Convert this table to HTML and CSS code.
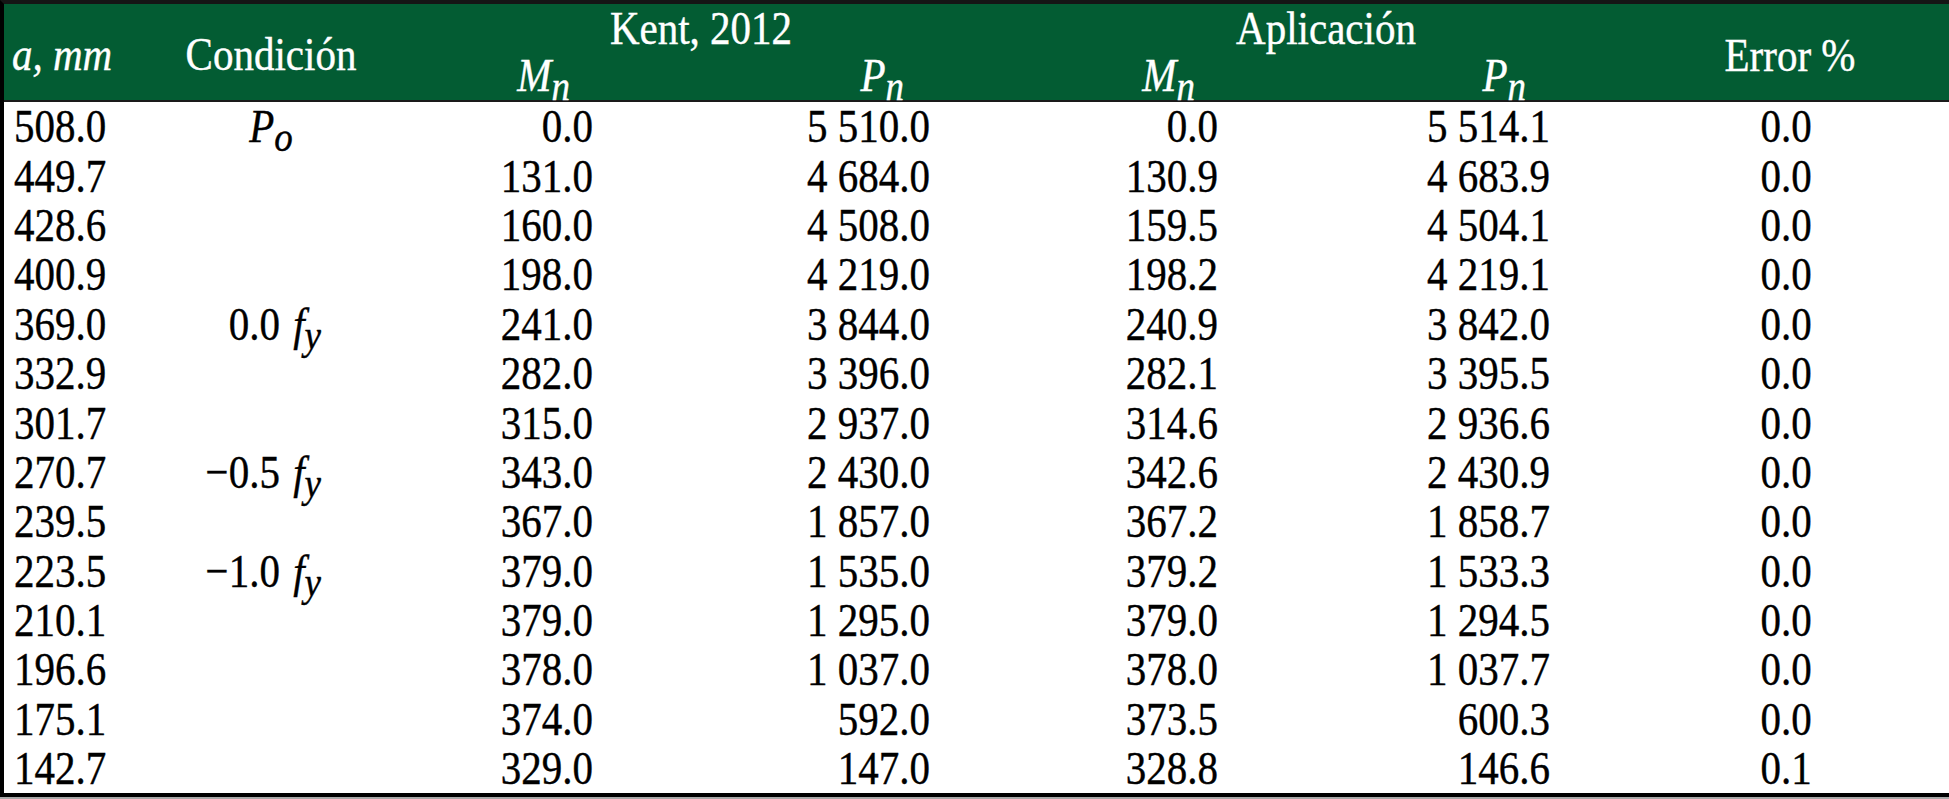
FILE: index.html
```html
<!DOCTYPE html>
<html lang="es">
<head>
<meta charset="utf-8">
<title>Tabla</title>
<link rel="stylesheet" href="styles.css">
</head>
<body>
<div class="sheet">
  <div class="head">
    <div class="h-a"><i>a, mm</i></div>
    <div class="h-cond">Condición</div>
    <div class="h-kent">Kent, 2012</div>
    <div class="h-apl">Aplicación</div>
    <div class="h-err">Error %</div>
    <div class="h-sub m"><i>M</i><sub>n</sub></div>
    <div class="h-sub p"><i>P</i><sub>n</sub></div>
    <div class="h-sub m"><i>M</i><sub>n</sub></div>
    <div class="h-sub p"><i>P</i><sub>n</sub></div>
  </div>
  <div class="body">
    <div class="c1">508.0</div><div class="c2"><i>P</i><sub>o</sub></div><div class="c3">0.0</div><div class="c4">5 510.0</div><div class="c5">0.0</div><div class="c6">5 514.1</div><div class="c7">0.0</div>
    <div class="c1">449.7</div><div class="c2"></div><div class="c3">131.0</div><div class="c4">4 684.0</div><div class="c5">130.9</div><div class="c6">4 683.9</div><div class="c7">0.0</div>
    <div class="c1">428.6</div><div class="c2"></div><div class="c3">160.0</div><div class="c4">4 508.0</div><div class="c5">159.5</div><div class="c6">4 504.1</div><div class="c7">0.0</div>
    <div class="c1">400.9</div><div class="c2"></div><div class="c3">198.0</div><div class="c4">4 219.0</div><div class="c5">198.2</div><div class="c6">4 219.1</div><div class="c7">0.0</div>
    <div class="c1">369.0</div><div class="c2 fy">0.0 <i>f</i><sub>y</sub></div><div class="c3">241.0</div><div class="c4">3 844.0</div><div class="c5">240.9</div><div class="c6">3 842.0</div><div class="c7">0.0</div>
    <div class="c1">332.9</div><div class="c2"></div><div class="c3">282.0</div><div class="c4">3 396.0</div><div class="c5">282.1</div><div class="c6">3 395.5</div><div class="c7">0.0</div>
    <div class="c1">301.7</div><div class="c2"></div><div class="c3">315.0</div><div class="c4">2 937.0</div><div class="c5">314.6</div><div class="c6">2 936.6</div><div class="c7">0.0</div>
    <div class="c1">270.7</div><div class="c2 fy">−0.5 <i>f</i><sub>y</sub></div><div class="c3">343.0</div><div class="c4">2 430.0</div><div class="c5">342.6</div><div class="c6">2 430.9</div><div class="c7">0.0</div>
    <div class="c1">239.5</div><div class="c2"></div><div class="c3">367.0</div><div class="c4">1 857.0</div><div class="c5">367.2</div><div class="c6">1 858.7</div><div class="c7">0.0</div>
    <div class="c1">223.5</div><div class="c2 fy">−1.0 <i>f</i><sub>y</sub></div><div class="c3">379.0</div><div class="c4">1 535.0</div><div class="c5">379.2</div><div class="c6">1 533.3</div><div class="c7">0.0</div>
    <div class="c1">210.1</div><div class="c2"></div><div class="c3">379.0</div><div class="c4">1 295.0</div><div class="c5">379.0</div><div class="c6">1 294.5</div><div class="c7">0.0</div>
    <div class="c1">196.6</div><div class="c2"></div><div class="c3">378.0</div><div class="c4">1 037.0</div><div class="c5">378.0</div><div class="c6">1 037.7</div><div class="c7">0.0</div>
    <div class="c1">175.1</div><div class="c2"></div><div class="c3">374.0</div><div class="c4">592.0</div><div class="c5">373.5</div><div class="c6">600.3</div><div class="c7">0.0</div>
    <div class="c1">142.7</div><div class="c2"></div><div class="c3">329.0</div><div class="c4">147.0</div><div class="c5">328.8</div><div class="c6">146.6</div><div class="c7">0.1</div>
  </div>
</div>
</body>
</html>
```
FILE: styles.css
```css
html, body {
  margin: 0;
  padding: 0;
  background: #a8a8a8;
}
.sheet {
  width: 1949px;
  box-sizing: border-box;
  border-top: 4px solid #151515;
  border-left: 4px solid #000;
  border-bottom: 4px solid #000;
  background: #fff;
  font-family: "Liberation Serif", "Times New Roman", serif;
  font-size: 41px;
  color: #000;
  -webkit-text-stroke: 0.35px currentColor;
}
.head, .body {
  display: grid;
  grid-template-columns: 151px 232px 253px 375px 250px 372px 312px;
}
.head {
  background: #035c33;
  color: #fff;
  grid-template-rows: 49px 47px;
  border-bottom: 2px solid #1a1a1a;
}
.head > div,
.body > div {
  line-height: 41px;
  align-self: center;
  white-space: nowrap;
  transform: scaleY(1.15);
}
.h-a {
  grid-column: 1;
  grid-row: 1 / 3;
  padding-left: 8px;
  padding-top: 4px;
}
.h-cond {
  grid-column: 2;
  grid-row: 1 / 3;
  text-align: center;
  padding-top: 4px;
}
.h-kent {
  grid-column: 3 / 5;
  grid-row: 1;
  text-align: center;
}
.h-apl {
  grid-column: 5 / 7;
  grid-row: 1;
  text-align: center;
}
.h-err {
  grid-column: 7;
  grid-row: 1 / 3;
  text-align: center;
  padding-right: 6px;
  padding-top: 6px;
}
.h-sub {
  grid-row: 2;
  text-align: right;
  margin-top: -2px;
}
.h-sub.m { padding-right: 70px; }
.h-sub.p { padding-right: 111px; }
sub {
  font-style: italic;
  font-size: 37px;
  vertical-align: -8px;
  line-height: 0;
}
.body {
  grid-auto-rows: 49.4px;
}
.c1 { padding-left: 10px; }
.c2 { text-align: center; }
.c2.fy { text-align: right; padding-right: 66px; }
.c2.fy i { margin-left: 3px; }
.c3, .c4, .c5, .c6 { text-align: right; }
.c3 { padding-right: 47px; }
.c4 { padding-right: 85px; }
.c5 { padding-right: 47px; }
.c6 { padding-right: 87px; }
.c7 { text-align: center; padding-right: 14px; }
```
